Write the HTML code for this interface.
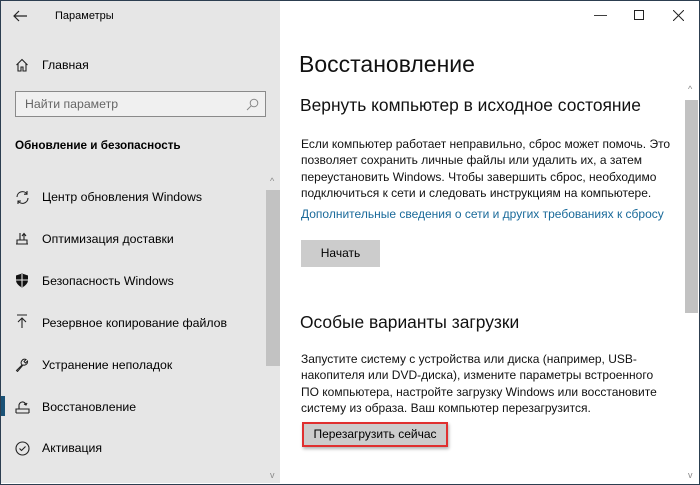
<!DOCTYPE html>
<html><head><meta charset="utf-8"><style>
*{margin:0;padding:0;box-sizing:border-box}
body{width:700px;height:485px;overflow:hidden;font-family:"Liberation Sans",sans-serif;background:#fff;position:relative}
.win{position:absolute;left:0;top:0;width:700px;height:485px;border:1px solid #2c3e50}
.side{position:absolute;left:1px;top:1px;width:279px;height:482px;background:#e6e6e6}
.t{position:absolute;white-space:nowrap;color:#000}
.s{font-size:12.3px}
.ic{position:absolute}
.p{position:absolute;left:301px;font-size:12px;line-height:16.3px;color:#111;white-space:nowrap}
</style></head><body>
<div class="win"></div>
<div class="side"></div>
<svg class="ic" style="left:12px;top:9px" width="16" height="14"><path d="M15 7H2M7 2L2 7l5 5" stroke="#222" fill="none" stroke-width="1.2"/></svg>
<div class="t" style="left:55px;top:10px;font-size:11px">Параметры</div>
<svg class="ic" style="left:15px;top:58px" width="14" height="14"><path d="M1.5 7L7 1.5 12.5 7M3 5.5V13h3V9h2v4h3V5.5" stroke="#222" fill="none" stroke-width="1.1"/></svg>
<div class="t s" style="left:42px;top:58px">Главная</div>
<div style="position:absolute;left:15px;top:91px;width:251px;height:26px;border:1px solid #8a8a8a;background:#f0f0f0"></div>
<div class="t" style="left:25px;top:97px;font-size:12.3px;color:#666">Найти параметр</div>
<svg class="ic" style="left:246px;top:98px" width="13" height="13"><circle cx="8" cy="5" r="3.8" stroke="#888" fill="none"/><path d="M5.3 7.7L1 12" stroke="#888"/></svg>
<div class="t" style="left:15px;top:139px;font-size:11.7px;font-weight:bold">Обновление и безопасность</div>
<div style="position:absolute;left:266px;top:190px;width:14px;height:176px;background:#c2c2c2"></div>
<div class="t" style="left:270px;top:176px;font-size:9px;color:#888">^</div>
<div class="t" style="left:270px;top:470px;font-size:9px;color:#888">v</div>
<svg class="ic" style="left:15px;top:190px" width="15" height="15"><path d="M2 7a5.5 5.5 0 0 1 10-3M13 8a5.5 5.5 0 0 1-10 3M12 1v3.2H9M3 14v-3h3" stroke="#222" fill="none" stroke-width="1.1"/></svg>
<div class="t s" style="left:42px;top:190px">Центр обновления Windows</div>
<svg class="ic" style="left:15px;top:231px" width="14" height="14"><path d="M1 13h12M2 13V9h10v4M5 9V2M9 9V3M7 5L9 2.5 11 5" stroke="#222" fill="none" stroke-width="1.1"/></svg>
<div class="t s" style="left:42px;top:232px">Оптимизация доставки</div>
<svg class="ic" style="left:15px;top:273px" width="14" height="15"><path d="M7 0.5L13 2.5V7c0 3.5-3 6-6 7.5C4 13 1 10.5 1 7V2.5z" fill="#111"/><path d="M7 1v13M1 7h12" stroke="#e6e6e6" stroke-width="1.1"/></svg>
<div class="t s" style="left:42px;top:274px">Безопасность Windows</div>
<svg class="ic" style="left:15px;top:314px" width="14" height="15"><path d="M2 1h10M7 14V4M3 8l4-4 4 4" stroke="#222" fill="none" stroke-width="1.1"/></svg>
<div class="t s" style="left:42px;top:316px">Резервное копирование файлов</div>
<svg class="ic" style="left:15px;top:357px" width="15" height="15"><path d="M1.5 13.5L7 8a3.5 3.5 0 0 1 4-5.5L9 4.5l1.5 1.5 2-2A3.5 3.5 0 0 1 8 8L2.5 14.5z" stroke="#222" fill="none" stroke-width="1"/></svg>
<div class="t s" style="left:42px;top:358px">Устранение неполадок</div>
<div style="position:absolute;left:1px;top:396px;width:4px;height:20px;background:#1a5276"></div>
<svg class="ic" style="left:15px;top:399px" width="15" height="15"><path d="M1 14h13M1 14v-4h13v4M4 10V7a3.5 3.5 0 0 1 7-1M9 5l2 1 1-2" stroke="#222" fill="none" stroke-width="1.1"/></svg>
<div class="t s" style="left:42px;top:400px">Восстановление</div>
<svg class="ic" style="left:15px;top:441px" width="15" height="15"><circle cx="7.5" cy="7.5" r="6.5" stroke="#222" fill="none" stroke-width="1.1"/><path d="M4.5 7.5l2 2 4-4" stroke="#222" fill="none" stroke-width="1.1"/></svg>
<div class="t s" style="left:42px;top:441px">Активация</div>

<div class="t" style="left:594px;top:7px;font-size:13px;color:#222">&#8212;</div>
<div style="position:absolute;left:634px;top:10px;width:10px;height:10px;border:1px solid #222"></div>
<svg class="ic" style="left:673px;top:10px" width="11" height="11"><path d="M0 0l11 11M11 0L0 11" stroke="#222" stroke-width="1"/></svg>
<div style="position:absolute;left:685px;top:100px;width:13px;height:213px;background:#c2c2c2"></div>
<div class="t" style="left:688px;top:84px;font-size:9px;color:#888">^</div>
<div class="t" style="left:688px;top:470px;font-size:9px;color:#888">v</div>

<div class="t" style="left:299px;top:51px;font-size:23px;color:#111">Восстановление</div>
<div class="t" style="left:300px;top:95px;font-size:17.4px;color:#111">Вернуть компьютер в исходное состояние</div>
<div class="p" style="top:136px">Если компьютер работает неправильно, сброс может помочь. Это<br>позволяет сохранить личные файлы или удалить их, а затем<br>переустановить Windows. Чтобы завершить сброс, необходимо<br>подключиться к сети и следовать инструкциям на компьютере.</div>
<div class="t" style="left:301px;top:207px;font-size:12px;color:#1a6a9a">Дополнительные сведения о сети и других требованиях к сбросу</div>
<div style="position:absolute;left:301px;top:240px;width:79px;height:27px;background:#cccccc;font-size:12px;text-align:center;line-height:27px">Начать</div>
<div class="t" style="left:300px;top:312px;font-size:17.4px;color:#111">Особые варианты загрузки</div>
<div class="p" style="top:351px">Запустите систему с устройства или диска (например, USB-<br>накопителя или DVD-диска), измените параметры встроенного<br>ПО компьютера, настройте загрузку Windows или восстановите<br>систему из образа. Ваш компьютер перезагрузится.</div>
<div style="position:absolute;left:302px;top:422px;width:146px;height:25px;background:#cccccc;border:2px solid #e03030;font-size:12px;text-align:center;line-height:21px;box-shadow:1px 2px 3px rgba(0,0,0,.3)">Перезагрузить сейчас</div>
</body></html>
